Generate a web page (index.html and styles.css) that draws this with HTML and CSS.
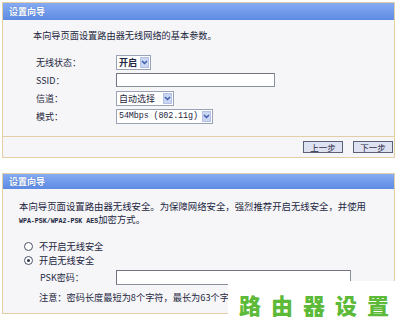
FILE: index.html
```html
<!DOCTYPE html>
<html lang="zh-CN">
<head>
    <meta charset="UTF-8">
    <meta name="viewport" content="width=device-width, initial-scale=1.0">
    <title>设置向导</title>
    <link rel="stylesheet" href="styles.css">
</head>
<body>
    <div class="panel first">
        <div class="panel-title">设置向导</div>
        <div class="panel-body">
            <p class="intro">本向导页面设置路由器无线网络的基本参数。</p>
            <div class="form-row">
                <span class="label">无线状态：</span>
                <span class="select sel-state"><span class="val">开启</span><span class="arrow"><svg width="7" height="5" viewBox="0 0 7 5"><path d="M1 1 L3.5 3.5 L6 1" fill="none" stroke="#3b5ba8" stroke-width="1.4"/></svg></span></span>
            </div>
            <div class="form-row">
                <span class="label">SSID：</span>
                <span class="input ssid"></span>
            </div>
            <div class="form-row">
                <span class="label">信道：</span>
                <span class="select sel-channel"><span class="val">自动选择</span><span class="arrow"><svg width="7" height="5" viewBox="0 0 7 5"><path d="M1 1 L3.5 3.5 L6 1" fill="none" stroke="#3b5ba8" stroke-width="1.4"/></svg></span></span>
            </div>
            <div class="form-row">
                <span class="label">模式：</span>
                <span class="select sel-mode"><span class="val mono">54Mbps (802.11g)</span><span class="arrow"><svg width="7" height="5" viewBox="0 0 7 5"><path d="M1 1 L3.5 3.5 L6 1" fill="none" stroke="#3b5ba8" stroke-width="1.4"/></svg></span></span>
            </div>
        </div>
        <div class="panel-foot">
            <button class="btn">上一步</button>
            <button class="btn">下一步</button>
        </div>
    </div>

    <div class="panel second">
        <div class="panel-title">设置向导</div>
        <div class="panel-body">
            <p class="intro2">本向导页面设置路由器无线安全。为保障网络安全，强烈推荐开启无线安全，并使用</p>
            <p class="intro2"><span class="tiny">WPA-PSK/WPA2-PSK AES</span>加密方式。</p>
            <div class="radio-row first-radio"><span class="radio"></span>不开启无线安全</div>
            <div class="radio-row"><span class="radio checked"></span>开启无线安全</div>
            <div class="psk-row">
                <span class="psk-label">PSK密码：</span>
                <span class="input psk"></span>
            </div>
            <p class="note">注意：密码长度最短为8个字符，最长为63个字符。</p>
        </div>
    </div>

    <div class="watermark">路由器设置</div>
</body>
</html>
```

FILE: styles.css
```css
body {
    margin: 0;
    background-color: #ffffff;
    font-family: "Noto Sans CJK SC", "Liberation Sans", sans-serif;
    font-size: 9px;
    color: #1d2640;
    position: relative;
    height: 334px;
    overflow: hidden;
}
.panel {
    width: 391px;
    margin-left: 2px;
    border: 1px solid #e3cfa6;
    background-color: #f6f6f9;
}
.panel.first {
    margin-top: 2px;
}
.panel.second {
    margin-top: 15px;
    border-bottom: none;
}
.panel-title {
    height: 17px;
    line-height: 17px;
    padding-left: 6px;
    color: #ffffff;
    font-weight: bold;
    font-size: 9px;
    background: linear-gradient(#86abf2, #5d8be3);
    text-shadow: 0 0 1px #3d64b8;
}
.second .panel-title {
    height: 15px;
    line-height: 15px;
}
.first .panel-body {
    height: 116px;
    padding-left: 30px;
}
.intro {
    margin: 0;
    padding-top: 9px;
    height: 24px;
    line-height: 12px;
    font-size: 9.2px;
}
.form-row {
    display: flex;
    align-items: center;
    height: 18px;
    padding-left: 3px;
}
.label {
    width: 80px;
    font-size: 9px;
}
.select {
    display: flex;
    align-items: center;
    height: 13px;
    border: 1px solid #9aa3b5;
    background-color: #ffffff;
    padding-left: 2px;
}
.select .val {
    flex: 1;
    font-size: 9px;
    line-height: 13px;
}
.select .mono {
    font-family: "Liberation Mono", monospace;
    font-size: 8.4px;
    letter-spacing: -0.1px;
}
.arrow {
    width: 9px;
    height: 11px;
    margin-right: 1px;
    display: flex;
    align-items: center;
    justify-content: center;
    background-color: #c9d5f2;
    border: 1px solid #b3c1e4;
    box-sizing: border-box;
}
.sel-state {
    width: 31px;
    font-weight: bold;
}
.sel-channel {
    width: 54px;
}
.sel-mode {
    width: 93px;
}
.input {
    display: block;
    height: 12px;
    background-color: #ffffff;
    border: 1px solid #8a8f9c;
    border-top-color: #6f7480;
    border-left-color: #6f7480;
}
.ssid {
    width: 157px;
}
.panel-foot {
    height: 20px;
    border-top: 1px solid #e3cfa6;
    display: flex;
    justify-content: flex-end;
    align-items: center;
    gap: 10px;
    padding-right: 1px;
}
.btn {
    width: 40px;
    height: 12px;
    padding: 0;
    font-family: "Noto Sans CJK SC", sans-serif;
    font-size: 8.5px;
    line-height: 10px;
    color: #1d2640;
    background-color: #dde1f0;
    border: 1px solid #5b6275;
    border-radius: 0;
}
.second .panel-body {
    height: 124px;
    padding-left: 16px;
    border-bottom: 1px solid #e3cfa6;
}
.intro2 {
    margin: 0;
    line-height: 13px;
    font-size: 9.4px;
}
.intro2:first-child {
    padding-top: 11px;
}
.tiny {
    font-family: "Liberation Mono", monospace;
    font-size: 6.6px;
    font-weight: bold;
}
.radio-row {
    display: flex;
    align-items: center;
    height: 14px;
    padding-left: 5px;
    font-size: 9.2px;
}
.first-radio {
    margin-top: 11px;
}
.radio {
    width: 7px;
    height: 7px;
    border: 1px solid #4a5266;
    border-radius: 50%;
    background-color: #ffffff;
    margin-right: 6px;
    position: relative;
}
.radio.checked::after {
    content: "";
    position: absolute;
    left: 2px;
    top: 2px;
    width: 3px;
    height: 3px;
    border-radius: 50%;
    background-color: #2b3550;
}
.psk-row {
    display: flex;
    align-items: center;
    height: 17px;
    margin-top: 2px;
    padding-left: 21px;
}
.psk-label {
    width: 76px;
    font-size: 9px;
}
.psk {
    width: 233px;
    height: 13px;
}
.note {
    margin: 5px 0 0 20px;
    font-size: 9.2px;
    line-height: 12px;
    white-space: nowrap;
}
.watermark {
    position: absolute;
    left: 228px;
    top: 281px;
    width: 172px;
    height: 53px;
    background-color: #ffffff;
    color: #5cba38;
    font-family: "Noto Sans CJK SC", sans-serif;
    font-weight: 900;
    font-size: 22px;
    letter-spacing: 10px;
    line-height: 46px;
    padding-left: 11px;
    white-space: nowrap;
    overflow: hidden;
    box-sizing: border-box;
}
```
